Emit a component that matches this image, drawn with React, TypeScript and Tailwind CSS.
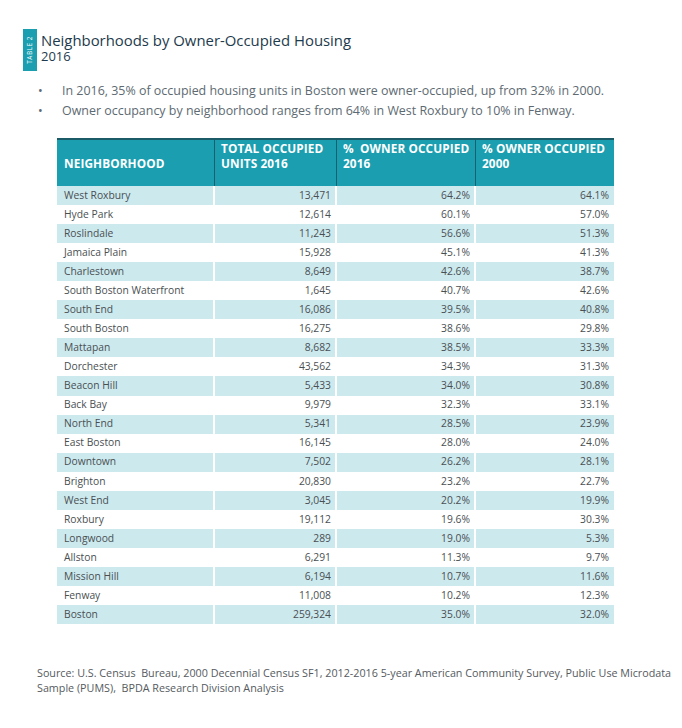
import React from "react";

const rows: [string, string, string, string][] = [
  ["West Roxbury", "13,471", "64.2%", "64.1%"],
  ["Hyde Park", "12,614", "60.1%", "57.0%"],
  ["Roslindale", "11,243", "56.6%", "51.3%"],
  ["Jamaica Plain", "15,928", "45.1%", "41.3%"],
  ["Charlestown", "8,649", "42.6%", "38.7%"],
  ["South Boston Waterfront", "1,645", "40.7%", "42.6%"],
  ["South End", "16,086", "39.5%", "40.8%"],
  ["South Boston", "16,275", "38.6%", "29.8%"],
  ["Mattapan", "8,682", "38.5%", "33.3%"],
  ["Dorchester", "43,562", "34.3%", "31.3%"],
  ["Beacon Hill", "5,433", "34.0%", "30.8%"],
  ["Back Bay", "9,979", "32.3%", "33.1%"],
  ["North End", "5,341", "28.5%", "23.9%"],
  ["East Boston", "16,145", "28.0%", "24.0%"],
  ["Downtown", "7,502", "26.2%", "28.1%"],
  ["Brighton", "20,830", "23.2%", "22.7%"],
  ["West End", "3,045", "20.2%", "19.9%"],
  ["Roxbury", "19,112", "19.6%", "30.3%"],
  ["Longwood", "289", "19.0%", "5.3%"],
  ["Allston", "6,291", "11.3%", "9.7%"],
  ["Mission Hill", "6,194", "10.7%", "11.6%"],
  ["Fenway", "11,008", "10.2%", "12.3%"],
  ["Boston", "259,324", "35.0%", "32.0%"],
];

const font = { fontFamily: '"Open Sans", "Noto Sans", sans-serif' };

export default function App() {
  return (
    <div className="w-[682px] h-[728px] bg-white relative overflow-hidden" style={font}>
      {/* Title */}
      <div className="flex items-start pl-[23px] pt-[29px]">
        <div className="w-[14px] h-[42px] bg-[#1a9eb0] flex items-center justify-center overflow-hidden">
          <span className="text-white text-[6.5px] tracking-[0.5px] [writing-mode:vertical-rl] rotate-180 whitespace-nowrap leading-none">
            TABLE 2
          </span>
        </div>
        <div className="ml-[4px] mt-[3px]">
          <div className="text-[14.9px] leading-[17px] text-[#1e3b4d]">
            Neighborhoods by Owner-Occupied Housing
          </div>
          <div className="text-[13px] leading-[15px] text-[#1e3b4d]">2016</div>
        </div>
      </div>

      {/* Bullets */}
      <div className="mt-[10px] pl-[38px] text-[12.45px] leading-[20px] text-[#5d6a72]">
        <div className="flex">
          <span className="w-[24px]">•</span>
          <span>In 2016, 35% of occupied housing units in Boston were owner-occupied, up from 32% in 2000.</span>
        </div>
        <div className="flex">
          <span className="w-[24px]">•</span>
          <span>Owner occupancy by neighborhood ranges from 64% in West Roxbury to 10% in Fenway.</span>
        </div>
      </div>

      {/* Table */}
      <div className="ml-[57px] mt-[17px] w-[557px]">
        <div className="h-[2px] bg-[#1b5b68]" />
        <div className="flex h-[46px] bg-[#1a9eb0] text-white font-bold text-[11.8px] leading-[15px] tracking-[0.1px]">
          <div className="w-[158px] border-r border-[#17606d] flex items-end pl-[7px] pb-[15px]">NEIGHBORHOOD</div>
          <div className="w-[122px] border-r border-[#17606d] pl-[6px] pt-[1px]">TOTAL OCCUPIED<br />UNITS 2016</div>
          <div className="w-[139px] border-r border-[#17606d] pl-[6px] pt-[1px] whitespace-pre">%  OWNER OCCUPIED<br />2016</div>
          <div className="flex-1 pl-[6px] pt-[1px]">% OWNER OCCUPIED<br />2000</div>
        </div>
        <div className="text-[10.3px] text-[#4a4f52]">
          {rows.map((r, i) => (
            <div
              key={r[0]}
              className={`flex h-[19.05px] items-center ${i % 2 === 0 ? "bg-[#cce9ee]" : "bg-white"}`}
            >
              <div className="w-[158px] h-full flex items-center pl-[7px] border-r-2 border-white">{r[0]}</div>
              <div className="w-[122px] h-full flex items-center justify-end pr-[4px] border-r-2 border-white">{r[1]}</div>
              <div className="w-[139px] h-full flex items-center justify-end pr-[4px] border-r-2 border-white">{r[2]}</div>
              <div className="flex-1 h-full flex items-center justify-end pr-[5px]">{r[3]}</div>
            </div>
          ))}
        </div>
      </div>

      {/* Source */}
      <div className="absolute left-[37px] top-[666px] w-[645px] text-[10.75px] leading-[15px] text-[#555a5e]">
        Source: U.S. Census&nbsp; Bureau, 2000 Decennial Census SF1, 2012-2016 5-year American Community Survey, Public Use Microdata Sample (PUMS),&nbsp; BPDA Research Division Analysis
      </div>
    </div>
  );
}
